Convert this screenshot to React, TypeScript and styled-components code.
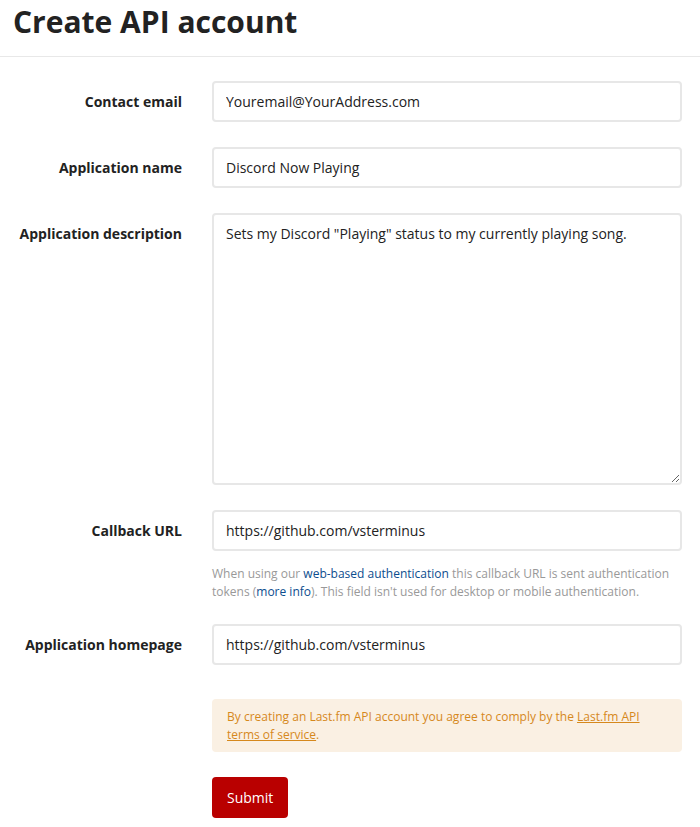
import React from "react";
import styled, { createGlobalStyle } from "styled-components";

const GlobalStyle = createGlobalStyle`
  body {
    margin: 0;
    background: #fff;
    font-family: "Open Sans", "Noto Sans", sans-serif;
    color: #222;
  }
`;

interface FieldProps {
  readonly label: string;
  readonly children: React.ReactNode;
}

const Field: React.FC<FieldProps> = ({ label, children }) => (
  <Row>
    <Label>{label}</Label>
    <Control>{children}</Control>
  </Row>
);

export default function App() {
  return (
    <Page>
      <GlobalStyle />
      <Header>
        <Title>Create API account</Title>
      </Header>
      <Form onSubmit={(e) => e.preventDefault()}>
        <Field label="Contact email">
          <Input defaultValue="Youremail@YourAddress.com" />
        </Field>
        <Field label="Application name">
          <Input defaultValue="Discord Now Playing" />
        </Field>
        <Field label="Application description">
          <TextArea defaultValue={'Sets my Discord "Playing" status to my currently playing song.'} />
        </Field>
        <Field label="Callback URL">
          <Input defaultValue="https://github.com/vsterminus" />
          <HelpText>
            When using our <HelpLink href="#">web-based authentication</HelpLink> this callback URL is sent authentication
            tokens (<HelpLink href="#">more info</HelpLink>). This field isn't used for desktop or mobile authentication.
          </HelpText>
        </Field>
        <Field label="Application homepage">
          <Input defaultValue="https://github.com/vsterminus" />
        </Field>
        <Row>
          <span />
          <Control>
            <Notice>
              By creating an Last.fm API account you agree to comply by the{" "}
              <NoticeLink href="#">Last.fm API terms of service</NoticeLink>.
            </Notice>
          </Control>
        </Row>
        <Row>
          <span />
          <Control>
            <SubmitButton type="submit">Submit</SubmitButton>
          </Control>
        </Row>
      </Form>
    </Page>
  );
}

const Page = styled.div`
  width: 700px;
`;

const Header = styled.header`
  box-sizing: border-box;
  height: 57px;
  padding: 3px 13px 0;
  border-bottom: 1px solid #e8e8e8;
`;

const Title = styled.h1`
  margin: 0;
  font-size: 30px;
  line-height: 38px;
  font-weight: 700;
  color: #222;
`;

const Form = styled.form`
  display: flex;
  flex-direction: column;
  gap: 25px;
  padding-top: 24px;
`;

const Row = styled.div`
  display: grid;
  grid-template-columns: 182px 470px;
  column-gap: 30px;
  align-items: start;
`;

const Label = styled.label`
  padding-top: 11px;
  font-size: 14px;
  line-height: 20px;
  font-weight: 700;
  text-align: right;
  color: #222;
`;

const Control = styled.div`
  display: flex;
  flex-direction: column;
`;

const Input = styled.input`
  box-sizing: border-box;
  width: 100%;
  height: 41px;
  padding: 0 12px;
  border: 2px solid #e7e7e7;
  border-radius: 4px;
  font-family: "Open Sans", sans-serif;
  font-size: 14px;
  color: #222;
  background: #fff;
  outline: none;
`;

const TextArea = styled.textarea`
  box-sizing: border-box;
  width: 100%;
  height: 272px;
  padding: 9px 12px;
  border: 2px solid #e7e7e7;
  border-radius: 4px;
  font-family: "Open Sans", sans-serif;
  font-size: 14px;
  line-height: 20px;
  color: #222;
  background: #fff;
  outline: none;
`;

const HelpText = styled.p`
  margin: 14px 0 -2px;
  font-size: 12px;
  line-height: 18px;
  color: #999;
`;

const HelpLink = styled.a`
  color: #0c4d8e;
  text-decoration: none;
`;

const Notice = styled.div`
  box-sizing: border-box;
  margin-top: 9px;
  padding: 9px 15px 8px;
  border-radius: 4px;
  background: #faf0e3;
  color: #d6881c;
  font-size: 12px;
  line-height: 18px;
`;

const NoticeLink = styled.a`
  color: #d6881c;
  text-decoration: underline;
`;

const SubmitButton = styled.button`
  align-self: flex-start;
  height: 41px;
  padding: 0 15px;
  border: 0;
  border-radius: 4px;
  background: #b90000;
  color: #fff;
  font-family: "Open Sans", sans-serif;
  font-size: 14px;
`;
